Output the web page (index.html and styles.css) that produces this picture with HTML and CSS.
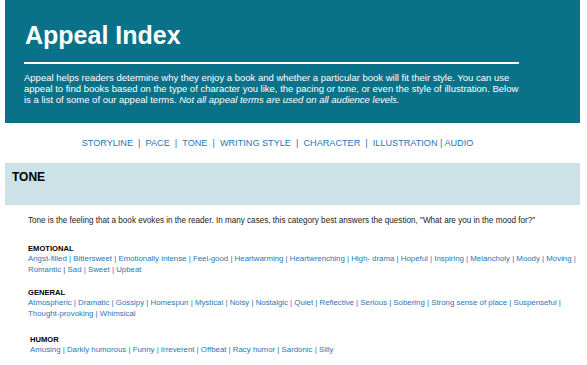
FILE: index.html
```html
<!DOCTYPE html>
<html lang="en">
<head>
    <meta charset="UTF-8">
    <meta name="viewport" content="width=device-width, initial-scale=1.0">
    <title>Appeal Index</title>
    <link rel="stylesheet" href="styles.css">
</head>
<body>
    <div class="page">
        <!-- Intro banner -->
        <div class="banner">
            <h1>Appeal Index</h1>
            <hr>
            <p>Appeal helps readers determine why they enjoy a book and whether a particular book will fit their style. You can use appeal to find books based on the type of character you like, the pacing or tone, or even the style of illustration. Below is a list of some of our appeal terms. <em>Not all appeal terms are used on all audience levels.</em></p>
        </div>

        <!-- Category links -->
        <div class="category-nav">
            <a href="#">STORYLINE</a>&nbsp; | &nbsp;<a href="#">PACE</a>&nbsp; | &nbsp;<a href="#">TONE</a>&nbsp; | &nbsp;<a href="#">WRITING STYLE</a>&nbsp; | &nbsp;<a href="#">CHARACTER</a>&nbsp; | &nbsp;<a href="#">ILLUSTRATION</a> | <a href="#">AUDIO</a>
        </div>

        <div class="section-title">
            <h2>TONE</h2>
        </div>

        <div class="section-body">
            <p class="intro">Tone is the feeling that a book evokes in the reader. In many cases, this category best answers the question, "What are you in the mood for?"</p>

            <div class="term-group">
                <h4>EMOTIONAL</h4>
                <div class="terms">
                    <a href="#">Angst-filled</a> | <a href="#">Bittersweet</a> | <a href="#">Emotionally intense</a> | <a href="#">Feel-good</a> | <a href="#">Heartwarming</a> | <a href="#">Heartwrenching</a> | <a href="#">High- drama</a> | <a href="#">Hopeful</a> | <a href="#">Inspiring</a> | <a href="#">Melancholy</a> | <a href="#">Moody</a> | <a href="#">Moving</a> | <a href="#">Romantic</a> | <a href="#">Sad</a> | <a href="#">Sweet</a> | <a href="#">Upbeat</a>
                </div>
            </div>

            <div class="term-group">
                <h4>GENERAL</h4>
                <div class="terms">
                    <a href="#">Atmospheric</a> | <a href="#">Dramatic</a> | <a href="#">Gossipy</a> | <a href="#">Homespun</a> | <a href="#">Mystical</a> | <a href="#">Noisy</a> | <a href="#">Nostalgic</a> | <a href="#">Quiet</a> | <a href="#">Reflective</a> | <a href="#">Serious</a> | <a href="#">Sobering</a> | <a href="#">Strong sense of place</a> | <a href="#">Suspenseful</a> | <a href="#">Thought-provoking</a> | <a href="#">Whimsical</a>
                </div>
            </div>

            <div class="term-group humor">
                <h4>HUMOR</h4>
                <div class="terms">
                    <a href="#">Amusing</a> | <a href="#">Darkly humorous</a> | <a href="#">Funny</a> | <a href="#">Irreverent</a> | <a href="#">Offbeat</a> | <a href="#">Racy humor</a> | <a href="#">Sardonic</a> | <a href="#">Silly</a>
                </div>
            </div>
        </div>
    </div>
</body>
</html>
```

FILE: styles.css
```css
/* Reset and base styles */
* {
    box-sizing: border-box;
    margin: 0;
    padding: 0;
}

body {
    font-family: "Liberation Sans", Arial, sans-serif;
    color: #222;
    background-color: #fff;
}

.page {
    padding: 0 7px 0 5px;
}

/* Intro banner */
.banner {
    background-color: #0a7288;
    color: #fff;
    padding: 20px 20px 18px 19px;
}

.banner h1 {
    font-size: 25px;
    line-height: 30px;
    font-weight: bold;
    padding-left: 1px;
}

.banner hr {
    border: none;
    height: 2px;
    background-color: #fff;
    width: 495px;
    margin: 12px 0 8px;
}

.banner p {
    font-size: 9.5px;
    line-height: 11px;
    width: 497px;
}

/* Category links */
.category-nav {
    text-align: center;
    font-size: 9.15px;
    line-height: 13px;
    color: #2b76b5;
    margin: 14px 30px 13px 0;
}

.category-nav a {
    color: #2b76b5;
    text-decoration: none;
}

/* Section heading */
.section-title {
    background-color: #cde2e7;
    height: 42px;
    padding: 7px 7px;
}

.section-title h2 {
    font-size: 12px;
    line-height: 14px;
    color: #000;
}

.section-body {
    padding: 10px 0 0 23px;
    margin-right: -5px;
}

.intro {
    font-size: 8.15px;
    line-height: 11px;
    margin-bottom: 17px;
}

.term-group {
    margin-bottom: 12px;
}

.term-group h4 {
    font-size: 7.6px;
    line-height: 11px;
    color: #000;
}

.terms {
    font-size: 7.85px;
    line-height: 10.5px;
    color: #2b76b5;
}

.terms a {
    color: #2b76b5;
    text-decoration: none;
}

.humor {
    padding: 3px 0 0 2px;
}
```
